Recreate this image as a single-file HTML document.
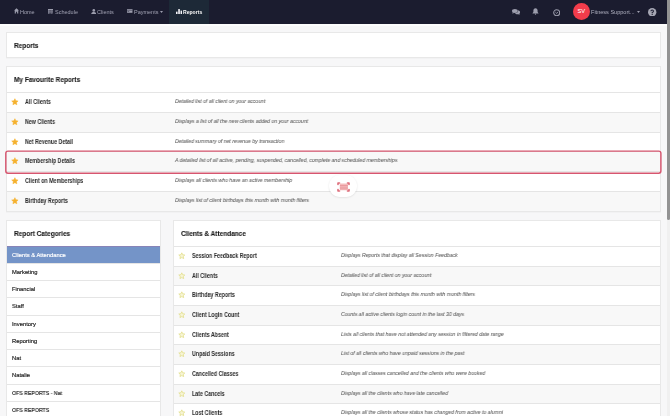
<!DOCTYPE html><html><head><meta charset="utf-8"><style>
*{box-sizing:border-box;margin:0;padding:0}
html,body{width:670px;height:416px;overflow:hidden;background:#f7f7f8;font-family:"Liberation Sans",sans-serif;color:#333}
.abs{position:absolute}
#nav{left:0;top:0;width:667px;height:24px;background:#1b1c2f}
.ni{position:absolute;top:0.5px;height:23px;line-height:23px;font-size:5.5px;color:#a2a3b4;white-space:nowrap}
#act{left:169px;top:0;width:39.5px;height:24px;background:#1d2937}
#sb{left:667px;top:0;width:3px;height:416px;background:#f0f0f0}
#thumb{left:667px;top:0;width:3px;height:219.5px;background:#939393;border-radius:0 0 1.5px 1.5px}
.card{position:absolute;background:#fff;border:1px solid #e8e8e8;box-shadow:0 1px 0 rgba(0,0,0,.02)}
.ttl{position:absolute;font-size:7px;font-weight:700;color:#161616;-webkit-text-stroke:0.08px currentColor;white-space:nowrap;transform-origin:0 0;transform:scaleX(.925);line-height:10px}
.row{position:absolute;left:0;right:0;border-top:1px solid #e5e5e5}
.row.g{background:#f8f8f8}
.rt{position:absolute;font-size:6.3px;font-weight:700;color:#2a2a2a;white-space:nowrap;transform-origin:0 0;transform:scaleX(.84);line-height:8px}
.rd{position:absolute;font-size:5.6px;font-style:italic;color:#5c5c5c;-webkit-text-stroke:0.05px currentColor;white-space:nowrap;transform-origin:0 0;transform:scaleX(.92);line-height:8px}
.cat{position:absolute;left:0;right:0;border-top:1px solid #e5e5e5;font-size:5.8px;color:#1a1a1a;white-space:nowrap;-webkit-text-stroke:0.16px currentColor}
.cat span{transform-origin:0 0;transform:scaleX(1)}
.cat span{position:absolute;left:4.5px;line-height:8px}
.star{position:absolute}
svg{display:block}
.ttl,.rt,.rd,.cat span,.ni{will-change:transform}
</style></head><body>
<div id="nav" class="abs">
  <svg class="abs" style="left:13.5px;top:8.3px;width:5px;height:5.7px" viewBox="0 0 10 11.4"><path fill="#9c9dad" d="M5 0.3L0.2 5.2H1.5V11.2H3.8V7.5H6.2V11.2H8.5V5.2H9.8z"/></svg>
  <div class="ni" style="left:20.3px">Home</div>
  <svg class="abs" style="left:47.8px;top:8.6px;width:5.4px;height:5.4px" viewBox="0 0 10 10"><path fill="#9c9dad" d="M0 0H10V10H0z M1.3 3H3.9V5.1H1.3z M4.5 3H5.6V5.1H4.5z"/><g fill="#3a3b4e"><rect x="0.9" y="2.4" width="2.5" height="1.9"/><rect x="3.8" y="2.4" width="2.5" height="1.9"/><rect x="6.6" y="2.4" width="2.5" height="1.9"/><rect x="0.9" y="4.9" width="2.5" height="1.9"/><rect x="3.8" y="4.9" width="2.5" height="1.9"/><rect x="6.6" y="4.9" width="2.5" height="1.9"/><rect x="0.9" y="7.4" width="2.5" height="1.9"/><rect x="3.8" y="7.4" width="2.5" height="1.9"/><rect x="6.6" y="7.4" width="2.5" height="1.9"/></g></svg>
  <div class="ni" style="left:54.8px">Schedule</div>
  <svg class="abs" style="left:90.5px;top:8.5px;width:5.6px;height:5.6px" viewBox="0 0 10 10"><circle cx="5" cy="2.6" r="2.4" fill="#9c9dad"/><path fill="#9c9dad" d="M0.3 10C0.3 6.8 2.2 5.4 5 5.4S9.7 6.8 9.7 10z"/></svg>
  <div class="ni" style="left:97px">Clients</div>
  <svg class="abs" style="left:127.2px;top:9.1px;width:5.5px;height:3.8px" viewBox="0 0 10 7"><path fill="#9c9dad" d="M0 0H10V7H0z"/><rect x="0" y="1.4" width="10" height="1.2" fill="#2e2f42"/><rect x="1" y="4.2" width="3" height="1" fill="#2e2f42"/></svg>
  <div class="ni" style="left:133.8px">Payments</div>
  <svg class="abs" style="left:160px;top:11.2px;width:3px;height:2px" viewBox="0 0 6 4"><path fill="#9c9dad" d="M0 0H6L3 4z"/></svg>
  <div id="act" class="abs"></div>
  <svg class="abs" style="left:176px;top:8.7px;width:6.2px;height:5.3px" viewBox="0 0 12 10"><g fill="#f2f2f6"><rect x="0" y="5" width="3" height="5"/><rect x="4.3" y="0" width="3.2" height="10"/><rect x="8.8" y="3" width="3" height="7"/></g></svg>
  <div class="ni" style="left:183.2px;color:#fafafa;font-weight:700;font-size:5.1px">Reports</div>
  <svg class="abs" style="left:512.3px;top:8.8px;width:8.2px;height:5.8px" viewBox="0 0 16 11.3"><ellipse cx="5.6" cy="4" rx="5.6" ry="3.9" fill="#9c9dad"/><path fill="#9c9dad" d="M1.5 6.5L0.8 9.5L4.5 7.5z"/><path fill="#9c9dad" d="M11.8 2.6C14.3 3.1 16 4.6 16 6.5C16 7.6 15.4 8.6 14.4 9.3L15 11.2L12.2 10.1C11.6 10.3 11 10.3 10.4 10.3C8.4 10.3 6.7 9.5 5.9 8.4C9.3 8.3 12 6.4 12 4z"/></svg>
  <svg class="abs" style="left:532.3px;top:8.4px;width:7px;height:6.6px" viewBox="0 0 14 13"><path fill="#9c9dad" d="M7 0.3C4.2 0.3 2.8 2.4 2.8 5V8L1 10.2V11H13V10.2L11.2 8V5C11.2 2.4 9.8 0.3 7 0.3z"/><circle cx="7" cy="12" r="1.3" fill="#9c9dad"/></svg>
  <svg class="abs" style="left:552.6px;top:8.6px;width:7.4px;height:7.4px" viewBox="0 0 16 16"><circle cx="8" cy="8" r="6.5" fill="none" stroke="#9c9dad" stroke-width="2.2"/><path d="M5.2 6.8L8 9.6L10.8 6.8" fill="none" stroke="#9c9dad" stroke-width="2"/></svg>
  <div class="abs" style="left:572.6px;top:2.8px;width:17.2px;height:17.2px;border-radius:50%;background:#f23c4b;color:#fff;font-size:5.7px;font-weight:400;-webkit-text-stroke:0.05px #fff;line-height:17.6px;text-align:center">SV</div>
  <div class="ni" style="left:591.2px;font-size:5.55px;color:#b0b1c0">Fitness Support...</div>
  <svg class="abs" style="left:637px;top:11.2px;width:3px;height:2px" viewBox="0 0 6 4"><path fill="#9c9dad" d="M0 0H6L3 4z"/></svg>
  <svg class="abs" style="left:648.3px;top:7.6px;width:8.4px;height:8.4px" viewBox="0 0 16 16"><circle cx="8" cy="8" r="8" fill="#a6a7b4"/><path fill="none" stroke="#1b1c2f" stroke-width="2" d="M5.6 6.2Q5.6 3.8 8 3.8T10.4 6.2Q10.4 7.6 8 8.6V10"/><circle cx="8" cy="12.2" r="1.1" fill="#1b1c2f"/></svg>
</div>
<div class="abs" style="left:0;top:24px;width:667px;height:1.6px;background:#fdfdfd"></div>
<div id="sb" class="abs"></div>
<div id="thumb" class="abs"></div>
<div class="card" style="left:6px;top:32px;width:655px;height:26px"><div class="ttl" style="left:6.6px;top:8.0px">Reports</div></div>
<div class="card" style="left:6px;top:66px;width:655px;height:146px"><div class="ttl" style="left:6.8px;top:8.0px">My Favourite Reports</div>
<div class="row" style="top:25px;height:20px">
<svg class="star" viewBox="0 0 24 24" style="left:4.199999999999999px;top:5.3999999999999995px;width:7.8px;height:7.8px"><path fill="#f5b12e" stroke="#f5b12e" stroke-width="1.6" stroke-linejoin="round" d="M12 2.2l3 6.2 6.8.9-5 4.7 1.3 6.8L12 17.5l-6.1 3.3 1.3-6.8-5-4.7 6.8-.9z"/></svg>
<div class="rt" style="left:18.2px;top:4.8px">All Clients</div>
<div class="rd" style="left:168.0px;top:4.0px">Detailed list of all client on your account</div>
</div>
<div class="row g" style="top:45px;height:20px">
<svg class="star" viewBox="0 0 24 24" style="left:4.199999999999999px;top:5.3999999999999995px;width:7.8px;height:7.8px"><path fill="#f5b12e" stroke="#f5b12e" stroke-width="1.6" stroke-linejoin="round" d="M12 2.2l3 6.2 6.8.9-5 4.7 1.3 6.8L12 17.5l-6.1 3.3 1.3-6.8-5-4.7 6.8-.9z"/></svg>
<div class="rt" style="left:18.2px;top:4.8px">New Clients</div>
<div class="rd" style="left:168.0px;top:4.0px">Displays a list of all the new clients added on your account</div>
</div>
<div class="row" style="top:65px;height:19px">
<svg class="star" viewBox="0 0 24 24" style="left:4.199999999999999px;top:4.8999999999999995px;width:7.8px;height:7.8px"><path fill="#f5b12e" stroke="#f5b12e" stroke-width="1.6" stroke-linejoin="round" d="M12 2.2l3 6.2 6.8.9-5 4.7 1.3 6.8L12 17.5l-6.1 3.3 1.3-6.8-5-4.7 6.8-.9z"/></svg>
<div class="rt" style="left:18.2px;top:4.8px">Net Revenue Detail</div>
<div class="rd" style="left:168.0px;top:4.0px">Detailed summary of net revenue by transaction</div>
</div>
<div class="row g" style="top:84px;height:20px">
<svg class="star" viewBox="0 0 24 24" style="left:4.199999999999999px;top:5.3999999999999995px;width:7.8px;height:7.8px"><path fill="#f5b12e" stroke="#f5b12e" stroke-width="1.6" stroke-linejoin="round" d="M12 2.2l3 6.2 6.8.9-5 4.7 1.3 6.8L12 17.5l-6.1 3.3 1.3-6.8-5-4.7 6.8-.9z"/></svg>
<div class="rt" style="left:18.2px;top:4.8px">Membership Details</div>
<div class="rd" style="left:168.0px;top:4.0px">A detailed list of all active, pending, suspended, cancelled, complete and scheduled memberships</div>
</div>
<div class="row" style="top:104px;height:20px">
<svg class="star" viewBox="0 0 24 24" style="left:4.199999999999999px;top:5.3999999999999995px;width:7.8px;height:7.8px"><path fill="#f5b12e" stroke="#f5b12e" stroke-width="1.6" stroke-linejoin="round" d="M12 2.2l3 6.2 6.8.9-5 4.7 1.3 6.8L12 17.5l-6.1 3.3 1.3-6.8-5-4.7 6.8-.9z"/></svg>
<div class="rt" style="left:18.2px;top:4.8px">Client on Memberships</div>
<div class="rd" style="left:168.0px;top:4.0px">Displays all clients who have an active membership</div>
</div>
<div class="row g" style="top:124px;height:20px">
<svg class="star" viewBox="0 0 24 24" style="left:4.199999999999999px;top:5.3999999999999995px;width:7.8px;height:7.8px"><path fill="#f5b12e" stroke="#f5b12e" stroke-width="1.6" stroke-linejoin="round" d="M12 2.2l3 6.2 6.8.9-5 4.7 1.3 6.8L12 17.5l-6.1 3.3 1.3-6.8-5-4.7 6.8-.9z"/></svg>
<div class="rt" style="left:18.2px;top:4.8px">Birthday Reports</div>
<div class="rd" style="left:168.0px;top:4.0px">Displays list of client birthdays this month with month filters</div>
</div>
</div>
<svg class="abs" style="left:0;top:140px;width:670px;height:40px" viewBox="0 140 670 40"><rect x="5.8" y="151.1" width="655.1" height="22.1" rx="2.2" fill="none" stroke="#d6566f" stroke-width="1.45"/></svg>
<div class="abs" style="left:329px;top:175px;width:28px;height:22px;border-radius:11px;background:#fff;box-shadow:0 0.5px 2px rgba(0,0,0,.12)"></div>
<svg class="abs" style="left:336.8px;top:181.6px;width:13px;height:10px" viewBox="0 0 26 20"><rect x="5.5" y="3" width="16.5" height="13.5" fill="#f4bcbc"/><g fill="#e58c92"><rect x="6" y="6" width="15.5" height="1.4"/><rect x="6" y="9.5" width="15.5" height="1.4"/><rect x="6" y="13" width="15.5" height="1.4"/></g><g fill="none" stroke="#de6c7a" stroke-width="3.2" stroke-linecap="round" stroke-linejoin="round"><path d="M2 5V2H5M21 2H24V5M24 15V18H21M5 18H2V15"/></g></svg>
<div class="card" style="left:6px;top:220px;width:154.6px;height:220px"><div class="ttl" style="left:7px;top:8.0px">Report Categories</div>
<div class="cat" style="top:25px;height:17px;background:#7494c8;color:#fff;border-top:1px solid #8784b8"><span style="top:4.4px">Clients &amp; Attendance</span></div>
<div class="cat" style="top:42px;height:17px"><span style="top:4.4px">Marketing</span></div>
<div class="cat" style="top:59px;height:17px"><span style="top:4.4px">Financial</span></div>
<div class="cat" style="top:76px;height:18px"><span style="top:4.4px">Staff</span></div>
<div class="cat" style="top:94px;height:17px"><span style="top:4.4px">Inventory</span></div>
<div class="cat" style="top:111px;height:17px"><span style="top:4.4px">Reporting</span></div>
<div class="cat" style="top:128px;height:17px"><span style="top:4.4px">Nat</span></div>
<div class="cat" style="top:145px;height:18px"><span style="top:4.4px">Natalie</span></div>
<div class="cat" style="top:163px;height:17px"><span style="top:4.4px;transform:scaleX(.9)">OFS REPORTS - Nat</span></div>
<div class="cat" style="top:180px;height:17px"><span style="top:4.4px;transform:scaleX(.9)">OFS REPORTS</span></div>
<div class="cat" style="top:197px;height:17px"><span style="top:4.4px">Other</span></div>
</div>
<div class="card" style="left:173px;top:220px;width:488px;height:220px"><div class="ttl" style="left:7px;top:8.0px">Clients &amp; Attendance</div>
<div class="row" style="top:25px;height:20px">
<svg class="star" viewBox="0 0 24 24" style="left:4.199999999999989px;top:5.2px;width:7.6px;height:7.6px"><path fill="#f7f5d6" stroke="#e0dc84" stroke-width="2.3" stroke-linejoin="round" d="M12 2.6l2.9 6.1 6.6.9-4.8 4.6 1.2 6.6L12 17.6l-5.9 3.2 1.2-6.6-4.8-4.6 6.6-.9z"/></svg>
<div class="rt" style="left:18.0px;top:4.5px">Session Feedback Report</div>
<div class="rd" style="left:166.5px;top:4.2px">Displays Reports that display all Session Feedback</div>
</div>
<div class="row g" style="top:45px;height:19px">
<svg class="star" viewBox="0 0 24 24" style="left:4.199999999999989px;top:4.7px;width:7.6px;height:7.6px"><path fill="#f7f5d6" stroke="#e0dc84" stroke-width="2.3" stroke-linejoin="round" d="M12 2.6l2.9 6.1 6.6.9-4.8 4.6 1.2 6.6L12 17.6l-5.9 3.2 1.2-6.6-4.8-4.6 6.6-.9z"/></svg>
<div class="rt" style="left:18.0px;top:4.5px">All Clients</div>
<div class="rd" style="left:166.5px;top:4.2px">Detailed list of all client on your account</div>
</div>
<div class="row" style="top:64px;height:20px">
<svg class="star" viewBox="0 0 24 24" style="left:4.199999999999989px;top:5.2px;width:7.6px;height:7.6px"><path fill="#f7f5d6" stroke="#e0dc84" stroke-width="2.3" stroke-linejoin="round" d="M12 2.6l2.9 6.1 6.6.9-4.8 4.6 1.2 6.6L12 17.6l-5.9 3.2 1.2-6.6-4.8-4.6 6.6-.9z"/></svg>
<div class="rt" style="left:18.0px;top:4.5px">Birthday Reports</div>
<div class="rd" style="left:166.5px;top:4.2px">Displays list of client birthdays this month with month filters</div>
</div>
<div class="row g" style="top:84px;height:20px">
<svg class="star" viewBox="0 0 24 24" style="left:4.199999999999989px;top:5.2px;width:7.6px;height:7.6px"><path fill="#f7f5d6" stroke="#e0dc84" stroke-width="2.3" stroke-linejoin="round" d="M12 2.6l2.9 6.1 6.6.9-4.8 4.6 1.2 6.6L12 17.6l-5.9 3.2 1.2-6.6-4.8-4.6 6.6-.9z"/></svg>
<div class="rt" style="left:18.0px;top:4.5px">Client Login Count</div>
<div class="rd" style="left:166.5px;top:4.2px">Counts all active clients login count in the last 30 days</div>
</div>
<div class="row" style="top:104px;height:19px">
<svg class="star" viewBox="0 0 24 24" style="left:4.199999999999989px;top:4.7px;width:7.6px;height:7.6px"><path fill="#f7f5d6" stroke="#e0dc84" stroke-width="2.3" stroke-linejoin="round" d="M12 2.6l2.9 6.1 6.6.9-4.8 4.6 1.2 6.6L12 17.6l-5.9 3.2 1.2-6.6-4.8-4.6 6.6-.9z"/></svg>
<div class="rt" style="left:18.0px;top:4.5px">Clients Absent</div>
<div class="rd" style="left:166.5px;top:4.2px">Lists all clients that have not attended any session in filtered date range</div>
</div>
<div class="row g" style="top:123px;height:20px">
<svg class="star" viewBox="0 0 24 24" style="left:4.199999999999989px;top:5.2px;width:7.6px;height:7.6px"><path fill="#f7f5d6" stroke="#e0dc84" stroke-width="2.3" stroke-linejoin="round" d="M12 2.6l2.9 6.1 6.6.9-4.8 4.6 1.2 6.6L12 17.6l-5.9 3.2 1.2-6.6-4.8-4.6 6.6-.9z"/></svg>
<div class="rt" style="left:18.0px;top:4.5px">Unpaid Sessions</div>
<div class="rd" style="left:166.5px;top:4.2px">List of all clients who have unpaid sessions in the past</div>
</div>
<div class="row" style="top:143px;height:20px">
<svg class="star" viewBox="0 0 24 24" style="left:4.199999999999989px;top:5.2px;width:7.6px;height:7.6px"><path fill="#f7f5d6" stroke="#e0dc84" stroke-width="2.3" stroke-linejoin="round" d="M12 2.6l2.9 6.1 6.6.9-4.8 4.6 1.2 6.6L12 17.6l-5.9 3.2 1.2-6.6-4.8-4.6 6.6-.9z"/></svg>
<div class="rt" style="left:18.0px;top:4.5px">Cancelled Classes</div>
<div class="rd" style="left:166.5px;top:4.2px">Displays all classes cancelled and the clients who were booked</div>
</div>
<div class="row g" style="top:163px;height:19px">
<svg class="star" viewBox="0 0 24 24" style="left:4.199999999999989px;top:4.7px;width:7.6px;height:7.6px"><path fill="#f7f5d6" stroke="#e0dc84" stroke-width="2.3" stroke-linejoin="round" d="M12 2.6l2.9 6.1 6.6.9-4.8 4.6 1.2 6.6L12 17.6l-5.9 3.2 1.2-6.6-4.8-4.6 6.6-.9z"/></svg>
<div class="rt" style="left:18.0px;top:4.5px">Late Cancels</div>
<div class="rd" style="left:166.5px;top:4.2px">Displays all the clients who have late cancelled</div>
</div>
<div class="row" style="top:182px;height:20px">
<svg class="star" viewBox="0 0 24 24" style="left:4.199999999999989px;top:5.2px;width:7.6px;height:7.6px"><path fill="#f7f5d6" stroke="#e0dc84" stroke-width="2.3" stroke-linejoin="round" d="M12 2.6l2.9 6.1 6.6.9-4.8 4.6 1.2 6.6L12 17.6l-5.9 3.2 1.2-6.6-4.8-4.6 6.6-.9z"/></svg>
<div class="rt" style="left:18.0px;top:4.5px">Lost Clients</div>
<div class="rd" style="left:166.5px;top:4.2px">Displays all the clients whose status has changed from active to alumni</div>
</div>
<div class="row g" style="top:202px;height:20px">
<svg class="star" viewBox="0 0 24 24" style="left:4.199999999999989px;top:5.2px;width:7.6px;height:7.6px"><path fill="#f7f5d6" stroke="#e0dc84" stroke-width="2.3" stroke-linejoin="round" d="M12 2.6l2.9 6.1 6.6.9-4.8 4.6 1.2 6.6L12 17.6l-5.9 3.2 1.2-6.6-4.8-4.6 6.6-.9z"/></svg>
<div class="rt" style="left:18.0px;top:4.5px">Client Visits</div>
<div class="rd" style="left:166.5px;top:4.2px">Displays all client visits</div>
</div>
</div>
</body></html>
